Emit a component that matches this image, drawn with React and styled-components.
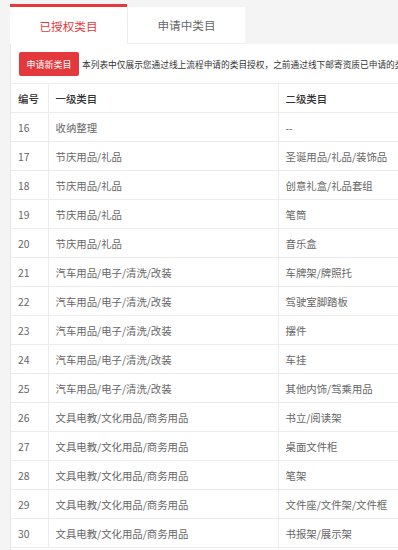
import React from 'react'
import styled, { createGlobalStyle } from 'styled-components'

const GlobalStyle = createGlobalStyle`
    html, body {
        margin: 0;
        background: #f4f4f4;
        font-family: "Noto Sans CJK SC", "Noto Sans", sans-serif;
    }
    #root {
        width: 398px;
        height: 550px;
        overflow: hidden;
    }
`

const Page = styled.div`
    padding: 4px 0 0 10px;
    height: 546px;
    overflow: hidden;
`

const TabBar = styled.div`
    display: flex;
    height: 40px;
`

const Tab = styled.div`
    width: ${(p) => p.width}px;
    box-sizing: border-box;
    display: flex;
    align-items: center;
    justify-content: center;
    background: #fff;
    font-size: 11.6px;
    color: ${(p) => (p.active ? '#e4393c' : '#666')};
    border-top: 3px solid ${(p) => (p.active ? '#e4393c' : '#f4f4f4')};
    border-left: ${(p) => (p.active ? 'none' : '1px solid #ededed')};
    border-bottom: ${(p) => (p.active ? 'none' : '1px solid #ededed')};
`

const Panel = styled.div`
    background: #fff;
    border-left: 1px solid #e6e6e6;
    padding-top: 8px;
    height: 100%;
`

const Toolbar = styled.div`
    display: flex;
    align-items: center;
    gap: 3px;
    padding-left: 8px;
    margin-bottom: 7px;
    white-space: nowrap;
`

const Button = styled.button`
    width: 60px;
    height: 24px;
    padding: 0;
    border: none;
    border-radius: 2px;
    background: #e4393c;
    color: #fff;
    font-family: inherit;
    font-size: 9px;
    flex-shrink: 0;
`

const Notice = styled.span`
    font-size: 8.7px;
    color: #333;
`

const Table = styled.table`
    border-collapse: collapse;
    table-layout: fixed;
    width: 560px;
    font-size: 10.4px;
`

const Th = styled.th`
    height: 28px;
    padding: 0 0 0 7px;
    text-align: left;
    font-weight: 500;
    color: #333;
    border: 1px solid #ececec;
    border-left: none;
`

const Td = styled.td`
    height: 28px;
    padding: 0 0 0 7px;
    color: #666;
    border: 1px solid #ececec;
    border-left: none;
    white-space: nowrap;
`

const rows = [
    [16, '收纳整理', '--'],
    [17, '节庆用品/礼品', '圣诞用品/礼品/装饰品'],
    [18, '节庆用品/礼品', '创意礼盒/礼品套组'],
    [19, '节庆用品/礼品', '笔筒'],
    [20, '节庆用品/礼品', '音乐盒'],
    [21, '汽车用品/电子/清洗/改装', '车牌架/牌照托'],
    [22, '汽车用品/电子/清洗/改装', '驾驶室脚踏板'],
    [23, '汽车用品/电子/清洗/改装', '摆件'],
    [24, '汽车用品/电子/清洗/改装', '车挂'],
    [25, '汽车用品/电子/清洗/改装', '其他内饰/驾乘用品'],
    [26, '文具电教/文化用品/商务用品', '书立/阅读架'],
    [27, '文具电教/文化用品/商务用品', '桌面文件柜'],
    [28, '文具电教/文化用品/商务用品', '笔架'],
    [29, '文具电教/文化用品/商务用品', '文件座/文件架/文件框'],
    [30, '文具电教/文化用品/商务用品', '书报架/展示架'],
]

const App = () => (
    <Page>
        <GlobalStyle />
        <TabBar>
            <Tab active width={117}>已授权类目</Tab>
            <Tab width={118}>申请中类目</Tab>
        </TabBar>
        <Panel>
            <Toolbar>
                <Button>申请新类目</Button>
                <Notice>本列表中仅展示您通过线上流程申请的类目授权，之前通过线下邮寄资质已申请的类目授权请联系客服查询</Notice>
            </Toolbar>
            <Table>
                <colgroup>
                    <col style={{ width: 37 }} />
                    <col style={{ width: 230 }} />
                    <col style={{ width: 293 }} />
                </colgroup>
                <thead>
                    <tr>
                        <Th>编号</Th>
                        <Th>一级类目</Th>
                        <Th>二级类目</Th>
                    </tr>
                </thead>
                <tbody>
                    {rows.map(([id, first, second]) => (
                        <tr key={id}>
                            <Td>{id}</Td>
                            <Td>{first}</Td>
                            <Td>{second}</Td>
                        </tr>
                    ))}
                </tbody>
            </Table>
        </Panel>
    </Page>
)

export default App
